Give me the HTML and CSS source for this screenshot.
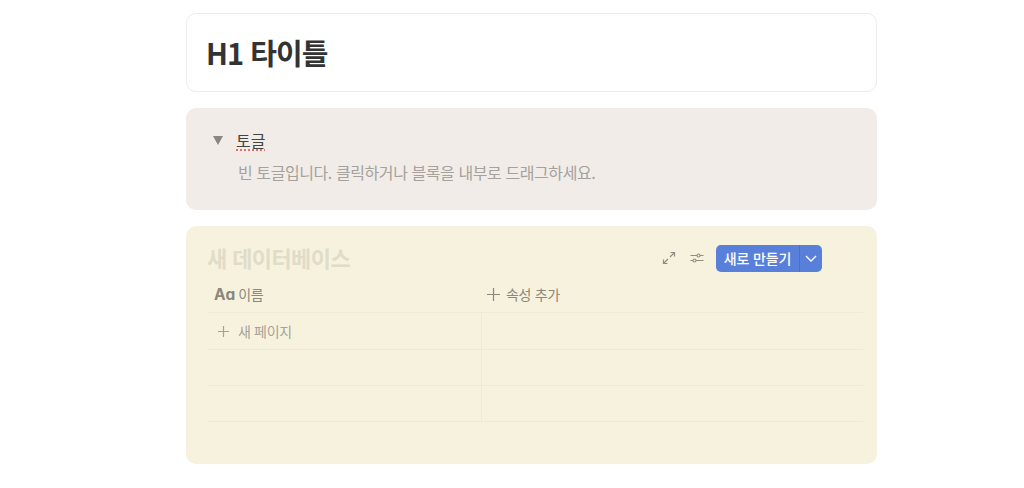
FILE: index.html
```html
<!DOCTYPE html>
<html lang="ko">
  <head>
    <meta charset="UTF-8" />
    <title>H1 타이틀</title>
    <link rel="stylesheet" href="styles.css">
  </head>
  <body>
    <div class="page">
      <div class="block title-block">
        <h1>H1 타이틀</h1>
      </div>

      <div class="block toggle-block">
        <div class="toggle-head">
          <span class="toggle-arrow"></span>
          <span class="toggle-label">토글</span>
        </div>
        <div class="toggle-empty">빈 토글입니다. 클릭하거나 블록을 내부로 드래그하세요.</div>
      </div>

      <div class="block db-block">
        <div class="db-top">
          <div class="db-title">새 데이터베이스</div>
          <div class="db-tools">
            <svg class="tool expand" width="14" height="14" viewBox="0 0 14 14" fill="none" stroke="#8f8c82" stroke-width="1.2">
              <path d="M8 6 L12.5 1.5 M8.5 1.5 H12.5 V5.5 M6 8 L1.5 12.5 M1.5 8.5 V12.5 H5.5" />
            </svg>
            <svg class="tool sliders" width="14" height="12" viewBox="0 0 14 12" fill="none" stroke="#8f8c82" stroke-width="1.1">
              <path d="M0.5 3.5 H7 M10 3.5 H13.5 M0.5 8.5 H3 M6 8.5 H13.5" />
              <circle cx="8.5" cy="3.5" r="1.5" />
              <circle cx="4.5" cy="8.5" r="1.5" />
            </svg>
            <div class="new-btn">
              <span class="new-label">새로 만들기</span>
              <span class="new-more">
                <svg width="12" height="7" viewBox="0 0 12 7" fill="none" stroke="#fff" stroke-width="1.4">
                  <path d="M1 1 L6 6 L11 1" />
                </svg>
              </span>
            </div>
          </div>
        </div>

        <div class="db-table">
          <div class="row head-row">
            <div class="cell name-cell"><span class="aa">Aɑ</span>이름</div>
            <div class="cell add-cell">
              <svg width="13" height="13" viewBox="0 0 13 13" stroke="#8a877d" stroke-width="1.2">
                <path d="M6.5 0 V13 M0 6.5 H13" />
              </svg>
              속성 추가
            </div>
          </div>
          <div class="row">
            <div class="cell first new-page">
              <svg width="11" height="11" viewBox="0 0 11 11" stroke="#a5a297" stroke-width="1.2">
                <path d="M5.5 0 V11 M0 5.5 H11" />
              </svg>
              새 페이지
            </div>
            <div class="cell"></div>
          </div>
          <div class="row">
            <div class="cell first"></div>
            <div class="cell"></div>
          </div>
          <div class="row">
            <div class="cell first"></div>
            <div class="cell"></div>
          </div>
        </div>
      </div>
    </div>
  </body>
</html>
```

FILE: styles.css
```css
body {
  margin: 0;
  height: 488px;
  overflow: hidden;
  background-color: #fff;
  font-family: "Noto Sans CJK KR", "Noto Sans", sans-serif;
}
.page {
  width: 691px;
  margin-left: 186px;
  padding-top: 13px;
  display: flex;
  flex-direction: column;
  gap: 16px;
}
.block {
  border-radius: 10px;
  box-sizing: border-box;
}
.title-block {
  height: 79px;
  border: 1px solid #ececea;
  padding-left: 19px;
  display: flex;
  align-items: center;
}
h1 {
  margin: -2px 0 0;
  font-size: 29px;
  font-weight: 700;
  letter-spacing: -0.95px;
  color: #333333;
  line-height: 40px;
}
.toggle-block {
  height: 102px;
  background-color: #f1ece8;
  padding: 21px 0 0 27px;
}
.toggle-head {
  display: flex;
  align-items: center;
  height: 22px;
}
.toggle-arrow {
  width: 0;
  height: 0;
  border-left: 5.5px solid transparent;
  border-right: 5.5px solid transparent;
  border-top: 9px solid #8a8782;
  margin-right: 13px;
}
.toggle-label {
  font-size: 16px;
  color: #45433d;
  text-decoration: underline dotted #d9534f;
  text-underline-offset: 3px;
}
.toggle-empty {
  margin: 10px 0 0 25px;
  font-size: 16px;
  line-height: 22px;
  letter-spacing: -0.42px;
  color: #a5a19c;
}
.db-block {
  height: 238px;
  background-color: #f7f2de;
  padding: 18px 14px 0 21px;
}
.db-top {
  display: flex;
  justify-content: space-between;
  align-items: center;
  height: 28px;
}
.db-title {
  font-size: 22px;
  font-weight: 700;
  letter-spacing: -0.6px;
  margin-top: -2px;
  color: #dfdcc8;
}
.db-tools {
  display: flex;
  align-items: center;
  margin-right: 41px;
}
.expand {
  margin-right: 14px;
}
.sliders {
  margin-right: 12px;
}
.new-btn {
  display: flex;
  height: 27px;
  border-radius: 5px;
  overflow: hidden;
  background-color: #5880da;
  color: #fff;
  font-size: 14px;
  font-weight: 500;
  letter-spacing: -0.15px;
}
.new-label {
  width: 84px;
  box-sizing: border-box;
  display: flex;
  align-items: center;
  justify-content: center;
  border-right: 1px solid #4b70c4;
}
.new-more {
  width: 22px;
  display: flex;
  align-items: center;
  justify-content: center;
}
.db-table {
  margin-top: 4.4px;
}
.row {
  display: flex;
  height: 36.33px;
  box-sizing: border-box;
  border-bottom: 1px solid #efe9d6;
  font-size: 14px;
  letter-spacing: -0.35px;
  color: #a5a297;
}
.head-row {
  height: 37px;
  color: #8a877d;
}
.cell {
  display: flex;
  align-items: center;
  box-sizing: border-box;
}
.first,
.name-cell {
  width: 275px;
  flex-shrink: 0;
}
.first {
  border-right: 1px solid #efe9d6;
}
.name-cell {
  padding-left: 7px;
}
.aa {
  font-family: "Inter", sans-serif;
  font-weight: 700;
  font-size: 15.5px;
  letter-spacing: 0;
  margin-right: 3px;
}
.add-cell {
  padding-left: 5px;
}
.add-cell svg {
  margin-right: 6px;
}
.new-page {
  padding-left: 11px;
}
.new-page svg {
  margin-right: 9px;
}
```
